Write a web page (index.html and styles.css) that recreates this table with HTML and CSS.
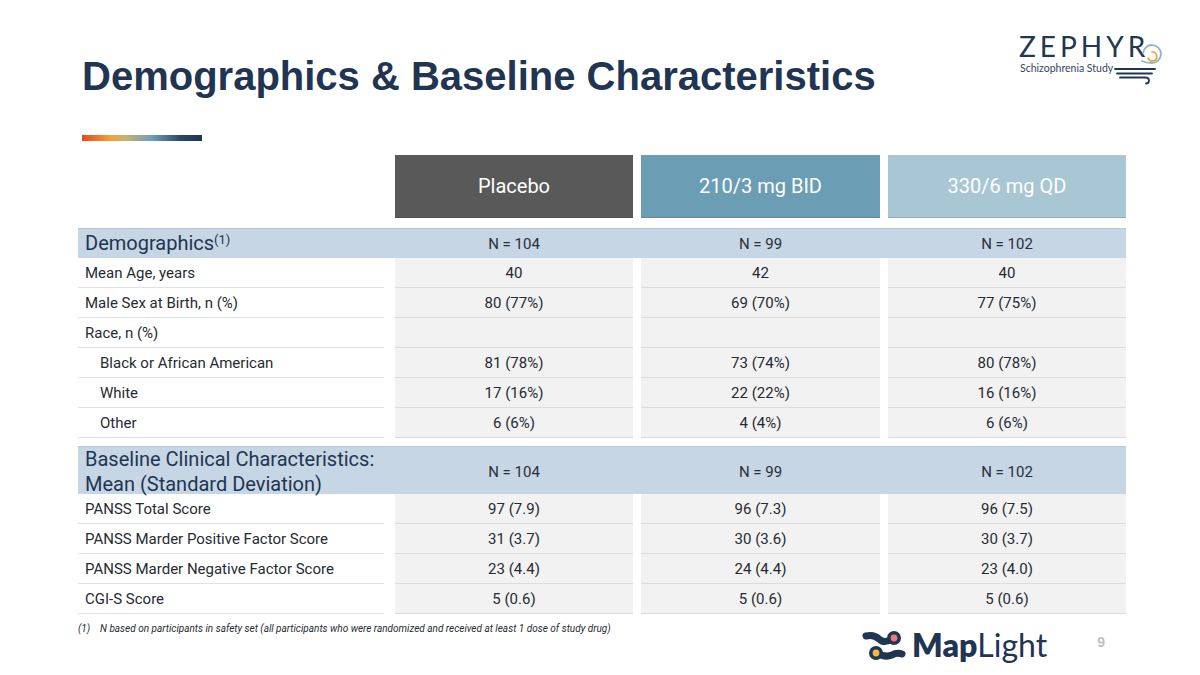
FILE: index.html
```html
<!DOCTYPE html>
<html lang="en">
<head>
<meta charset="utf-8">
<title>Demographics &amp; Baseline Characteristics</title>
<link rel="stylesheet" href="styles.css">
</head>
<body>
<div class="slide">
  <div class="top">
    <h1 class="title">Demographics &amp; Baseline Characteristics</h1>
    <div class="zlogo">
      <div class="zname">ZEPHYR</div>
      <div class="zsub">Schizophrenia Study</div>
      <svg class="zwind" width="60" height="44" viewBox="0 0 60 44">
        <defs>
          <linearGradient id="rg" x1="0" x2="1" y1="0" y2="0">
            <stop offset="0" stop-color="#d6372a"/>
            <stop offset="1" stop-color="#f0a23a"/>
          </linearGradient>
        </defs>
        <path d="M30 17 Q34 19 40 19 A9 9 0 1 0 31 9" fill="none" stroke="#8fb4cb" stroke-width="1.8" stroke-linecap="round"/>
        <path d="M36 14 A4.5 4.5 0 1 0 40 8" fill="none" stroke="#f0a23a" stroke-width="1.7" stroke-linecap="round"/>
        <line x1="5" y1="21" x2="31" y2="21" stroke="url(#rg)" stroke-width="2" stroke-linecap="round"/>
        <line x1="3" y1="25" x2="43" y2="25" stroke="#213752" stroke-width="1.8" stroke-linecap="round"/>
        <line x1="5" y1="29.5" x2="40" y2="29.5" stroke="#213752" stroke-width="1.8" stroke-linecap="round"/>
        <path d="M8 33.5 L33 33.5 Q37 33.5 37 36.5 Q37 39.5 34 39.5" fill="none" stroke="#213752" stroke-width="1.8" stroke-linecap="round"/>
      </svg>
    </div>
  </div>

  <div class="bar"></div>

  <div class="table">
    <div class="row head">
      <div class="lbl"></div>
      <div class="hcell c1">Placebo</div>
      <div class="hcell c2">210/3 mg BID</div>
      <div class="hcell c3">330/6 mg QD</div>
    </div>

    <div class="row section">
      <div class="lbl sec">Demographics<sup>(1)</sup></div>
      <div class="cell">N = 104</div>
      <div class="cell">N = 99</div>
      <div class="cell">N = 102</div>
    </div>
    <div class="row data">
      <div class="lbl">Mean Age, years</div>
      <div class="cell">40</div><div class="cell">42</div><div class="cell">40</div>
    </div>
    <div class="row data">
      <div class="lbl">Male Sex at Birth, n (%)</div>
      <div class="cell">80 (77%)</div><div class="cell">69 (70%)</div><div class="cell">77 (75%)</div>
    </div>
    <div class="row data">
      <div class="lbl">Race, n (%)</div>
      <div class="cell"></div><div class="cell"></div><div class="cell"></div>
    </div>
    <div class="row data">
      <div class="lbl ind">Black or African American</div>
      <div class="cell">81 (78%)</div><div class="cell">73 (74%)</div><div class="cell">80 (78%)</div>
    </div>
    <div class="row data">
      <div class="lbl ind">White</div>
      <div class="cell">17 (16%)</div><div class="cell">22 (22%)</div><div class="cell">16 (16%)</div>
    </div>
    <div class="row data">
      <div class="lbl ind">Other</div>
      <div class="cell">6 (6%)</div><div class="cell">4 (4%)</div><div class="cell">6 (6%)</div>
    </div>

    <div class="row section tall">
      <div class="lbl sec">Baseline Clinical Characteristics:<br>Mean (Standard Deviation)</div>
      <div class="cell">N = 104</div>
      <div class="cell">N = 99</div>
      <div class="cell">N = 102</div>
    </div>
    <div class="row data">
      <div class="lbl">PANSS Total Score</div>
      <div class="cell">97 (7.9)</div><div class="cell">96 (7.3)</div><div class="cell">96 (7.5)</div>
    </div>
    <div class="row data">
      <div class="lbl">PANSS Marder Positive Factor Score</div>
      <div class="cell">31 (3.7)</div><div class="cell">30 (3.6)</div><div class="cell">30 (3.7)</div>
    </div>
    <div class="row data">
      <div class="lbl">PANSS Marder Negative Factor Score</div>
      <div class="cell">23 (4.4)</div><div class="cell">24 (4.4)</div><div class="cell">23 (4.0)</div>
    </div>
    <div class="row data">
      <div class="lbl">CGI-S Score</div>
      <div class="cell">5 (0.6)</div><div class="cell">5 (0.6)</div><div class="cell">5 (0.6)</div>
    </div>
  </div>

  <div class="foot">
    <p class="note"><span class="num">(1)</span>N based on participants in safety set (all participants who were randomized and received at least 1 dose of study drug)</p>
    <div class="mlogo">
      <svg class="micon" width="46" height="36" viewBox="0 0 46 36">
        <path d="M5 9 Q13 7 18 12 Q23 17 31 12" fill="none" stroke="#1f3552" stroke-width="7" stroke-linecap="round"/>
        <circle cx="33" cy="11" r="7" fill="#1f3552"/>
        <circle cx="33" cy="11" r="3.4" fill="#ee7a7a"/>
        <path d="M16 26 Q24 31 31 28 Q36 25 41 27" fill="none" stroke="#1f3552" stroke-width="7" stroke-linecap="round"/>
        <circle cx="15" cy="26" r="7" fill="#1f3552"/>
        <circle cx="15" cy="26" r="3.4" fill="#f3b940"/>
      </svg>
      <span class="mtext"><b>Map</b>Light</span>
    </div>
    <div class="page">9</div>
  </div>
</div>
</body>
</html>
```

FILE: styles.css
```css
* { box-sizing: border-box; }
html, body { margin: 0; padding: 0; background: #ffffff; }
.slide {
  width: 1200px;
  height: 675px;
  overflow: hidden;
  font-family: Roboto, "Liberation Sans", sans-serif;
  color: #262b33;
}
.top {
  display: flex;
  justify-content: space-between;
  align-items: flex-start;
  padding: 28px 28px 0 82px;
}
.title {
  margin: 25px 0 0 0;
  font-family: "Liberation Sans", Arial, sans-serif;
  font-weight: 700;
  font-size: 40px;
  line-height: 46px;
  color: #1f3552;
}
.zlogo {
  position: relative;
  width: 160px;
  height: 60px;
}
.zname {
  font-family: Lato, "Open Sans", sans-serif;
  font-weight: 400;
  font-size: 28px;
  line-height: 26px;
  letter-spacing: 4px;
  color: #213752;
  margin: 5px 0 0 7px;
}
.zsub {
  font-family: Lato, "Open Sans", sans-serif;
  font-size: 10.5px;
  line-height: 13px;
  color: #344660;
  margin: 3px 0 0 8px;
}
.zwind {
  position: absolute;
  left: 100px;
  top: 16px;
}
.bar {
  margin: 36px 0 0 82px;
  width: 120px;
  height: 6px;
  background: linear-gradient(90deg, #e4491f 0%, #f2a234 24%, #c8b26a 36%, #6f9fba 58%, #2b4868 82%, #1f3552 100%);
}
.table {
  margin: 14px 0 0 78px;
  width: 1048px;
}
.row {
  display: grid;
  grid-template-columns: 309px 238px 239px 238px;
  column-gap: 8px;
}
.head { height: 63px; margin-bottom: 10px; }
.hcell {
  display: flex;
  align-items: center;
  justify-content: center;
  color: #ffffff;
  font-size: 20px;
  font-weight: 400;
  border-bottom: 1px solid rgba(0,0,0,0.12);
}
.c1 { background: #595959; }
.c2 { background: #6b9db5; }
.c3 { background: #a9c6d5; }
.lbl {
  margin-right: 3px;
  padding-left: 7px;
  display: flex;
  align-items: center;
  font-size: 15px;
}
.ind { padding-left: 22px; }
.cell {
  display: flex;
  align-items: center;
  justify-content: center;
  font-size: 15px;
}
.section {
  background: #c6d6e5;
  height: 30px;
  border-top: 1px solid #b8c8d8;
}
.section .cell { color: #2a2f38; }
.section.tall { height: 48px; margin-top: 8px; }
.sec {
  font-size: 20px;
  font-weight: 400;
  line-height: 25px;
  color: #1f3552;
}
.sec sup {
  font-size: 13px;
  line-height: 0;
  position: relative;
  top: -4px;
  vertical-align: super;
  font-weight: 400;
}
.data { height: 30px; }
.data .lbl { border-bottom: 1px solid #dfe2e6; }
.data .cell {
  background: #f2f2f2;
  border-bottom: 1px solid #dcdcdc;
}
.foot {
  display: flex;
  align-items: flex-start;
  padding: 0 95px 0 78px;
}
.note {
  flex: 1;
  margin: 8px 0 0 0;
  font-size: 10px;
  line-height: 13px;
  font-style: italic;
  color: #262b33;
}
.num { display: inline-block; width: 22px; }
.mlogo {
  display: flex;
  align-items: center;
  margin-top: 13px;
}
.micon { display: block; }
.mtext {
  margin-left: 5px;
  font-family: Lato, "Open Sans", sans-serif;
  font-size: 32px;
  line-height: 36px;
  color: #1f3552;
  font-weight: 400;
}
.mtext b { font-weight: 800; }
.page {
  margin: 20px 0 0 50px;
  font-family: "Liberation Sans", Arial, sans-serif;
  font-weight: 700;
  font-size: 14px;
  color: #c0c0c0;
}
```
